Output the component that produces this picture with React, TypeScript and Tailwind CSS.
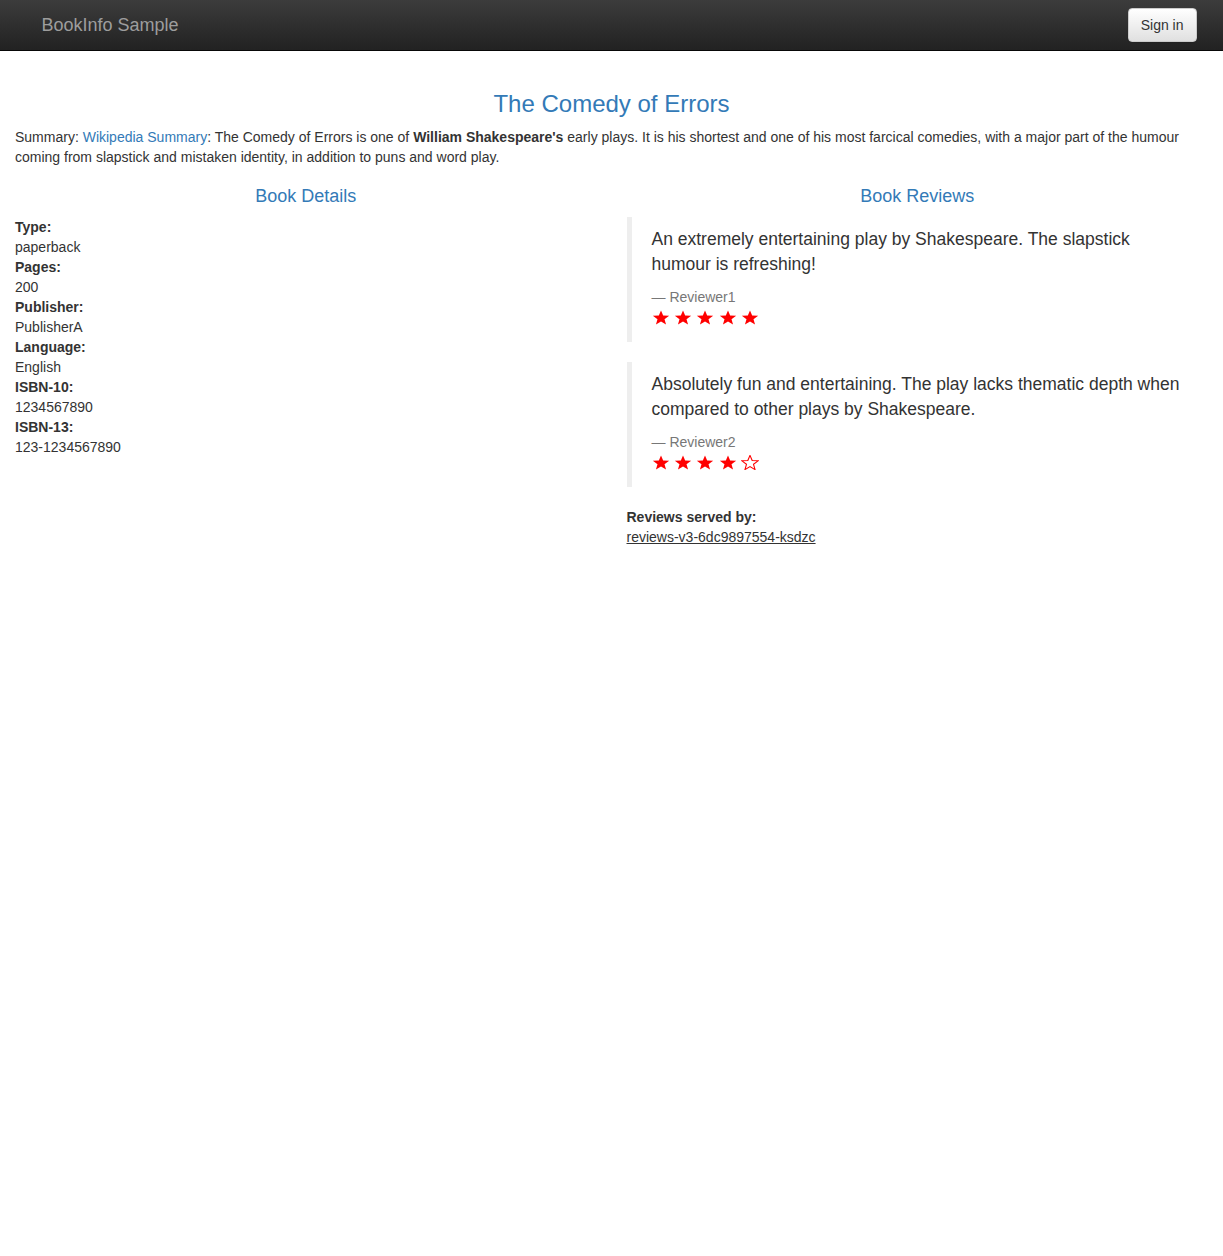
import React from "react";

const FONT = { fontFamily: '"Liberation Sans", Arial, Helvetica, sans-serif' };

const STAR_POINTS =
    "10,0 12.53,6.52 19.51,6.91 14.09,11.33 15.88,18.09 10,14.3 4.12,18.09 5.91,11.33 0.49,6.91 7.47,6.52";

const Star = ({ filled }: { filled: boolean }) => (
    <svg viewBox="-0.5 -0.5 21 19.1" preserveAspectRatio="none" className="block w-[18px] h-[15px] shrink-0">
        {filled ? (
            <polygon points={STAR_POINTS} fill="#ff0000" />
        ) : (
            <polygon points={STAR_POINTS} fill="none" stroke="#ff0000" strokeWidth="1.3" />
        )}
    </svg>
);

interface Review {
    text: string;
    reviewer: string;
    rating: number;
}

const reviews: Review[] = [
    {
        text: "An extremely entertaining play by Shakespeare. The slapstick humour is refreshing!",
        reviewer: "Reviewer1",
        rating: 5,
    },
    {
        text: "Absolutely fun and entertaining. The play lacks thematic depth when compared to other plays by Shakespeare.",
        reviewer: "Reviewer2",
        rating: 4,
    },
];

const details: [string, string][] = [
    ["Type:", "paperback"],
    ["Pages:", "200"],
    ["Publisher:", "PublisherA"],
    ["Language:", "English"],
    ["ISBN-10:", "1234567890"],
    ["ISBN-13:", "123-1234567890"],
];

const Navbar = () => (
    <nav className="h-[51px] border-b border-[#080808] bg-linear-to-b from-[#3c3c3c] to-[#222222]">
        <div className="w-[1170px] mx-auto px-[15px] flex items-start justify-between">
            <a className="text-[18px] leading-[20px] text-[#9d9d9d] py-[15px]">BookInfo Sample</a>
            <button className="-mr-[15px] mt-[8px] h-[34px] px-[12px] text-[14px] leading-[20px] text-[#333] rounded-[4px] border border-[#ccc] bg-linear-to-b from-white to-[#e0e0e0] shadow-[inset_0_1px_0_rgba(255,255,255,0.15),0_1px_1px_rgba(0,0,0,0.075)]">
                Sign in
            </button>
        </div>
    </nav>
);

const ReviewQuote = ({ review }: { review: Review }) => (
    <blockquote className="border-l-[5px] border-[#eeeeee] px-[20px] py-[10px] mb-[20px] text-[17.5px] leading-[25px]">
        <p className="mb-[10px]">{review.text}</p>
        <small className="block text-[14px] leading-[20px] text-[#777]">— {review.reviewer}</small>
        <div className="h-[25px] flex items-start gap-[4.4px] pt-[2.5px]">
            {[1, 2, 3, 4, 5].map((n) => (
                <Star key={n} filled={n <= review.rating} />
            ))}
        </div>
    </blockquote>
);

export default function App() {
    return (
        <div className="min-h-[1256px] bg-white text-[#333] text-[14px] leading-[20px]" style={FONT}>
            <Navbar />
            <div className="px-[15px] pt-[20px]">
                <h3 className="mt-[20px] mb-[10px] text-[24px] leading-[26.4px] font-normal text-center text-[#337ab7]">
                    The Comedy of Errors
                </h3>
                <p className="mb-[10px]">
                    Summary: <a className="text-[#337ab7]">Wikipedia Summary</a>: The Comedy of Errors is one of{" "}
                    <b>William Shakespeare's</b> early plays. It is his shortest and one of his most farcical comedies,
                    with a major part of the humour coming from slapstick and mistaken identity, in addition to puns and
                    word play.
                </p>
                <div className="grid grid-cols-2 gap-x-[30px]">
                    <div>
                        <h4 className="mt-[10px] mb-[10px] text-[18px] leading-[19.8px] text-center text-[#337ab7]">
                            Book Details
                        </h4>
                        <dl className="mb-[20px]">
                            {details.map(([label, value]) => (
                                <React.Fragment key={label}>
                                    <dt className="font-bold">{label}</dt>
                                    <dd>{value}</dd>
                                </React.Fragment>
                            ))}
                        </dl>
                    </div>
                    <div>
                        <h4 className="mt-[10px] mb-[10px] text-[18px] leading-[19.8px] text-center text-[#337ab7]">
                            Book Reviews
                        </h4>
                        {reviews.map((r) => (
                            <ReviewQuote key={r.reviewer} review={r} />
                        ))}
                        <dl>
                            <dt className="font-bold">Reviews served by:</dt>
                            <u>reviews-v3-6dc9897554-ksdzc</u>
                        </dl>
                    </div>
                </div>
            </div>
        </div>
    );
}
